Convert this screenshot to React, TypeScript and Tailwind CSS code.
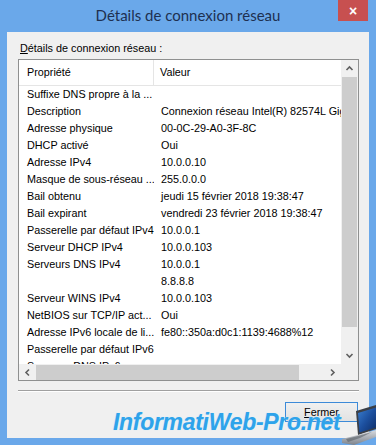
import React from "react";

const rows: [string, string][] = [
  ["Suffixe DNS propre à la ...", ""],
  ["Description", "Connexion réseau Intel(R) 82574L Gigabit Network Connection"],
  ["Adresse physique", "00-0C-29-A0-3F-8C"],
  ["DHCP activé", "Oui"],
  ["Adresse IPv4", "10.0.0.10"],
  ["Masque de sous-réseau ...", "255.0.0.0"],
  ["Bail obtenu", "jeudi 15 février 2018 19:38:47"],
  ["Bail expirant", "vendredi 23 février 2018 19:38:47"],
  ["Passerelle par défaut IPv4", "10.0.0.1"],
  ["Serveur DHCP IPv4", "10.0.0.103"],
  ["Serveurs DNS IPv4", "10.0.0.1"],
  ["", "8.8.8.8"],
  ["Serveur WINS IPv4", "10.0.0.103"],
  ["NetBIOS sur TCP/IP act...", "Oui"],
  ["Adresse IPv6 locale de li...", "fe80::350a:d0c1:1139:4688%12"],
  ["Passerelle par défaut IPv6", ""],
  ["Serveurs DNS IPv6", ""],
];

function Chevron({ dir }: { dir: "up" | "down" | "left" | "right" }) {
  const pts: Record<string, string> = {
    up: "1.5,6 4.5,3 7.5,6",
    down: "1.5,3 4.5,6 7.5,3",
    left: "6,1.5 3,4.5 6,7.5",
    right: "3,1.5 6,4.5 3,7.5",
  };
  return (
    <svg width="9" height="9" viewBox="0 0 9 9">
      <polyline points={pts[dir]} fill="none" stroke="#606060" strokeWidth="1.6" />
    </svg>
  );
}

function Laptop() {
  return (
    <svg width="34" height="42" viewBox="0 0 34 42">
      <defs>
        <linearGradient id="scr" x1="0" y1="0" x2="1" y2="1">
          <stop offset="0" stopColor="#3a7fd0" />
          <stop offset="0.5" stopColor="#1c4f9e" />
          <stop offset="1" stopColor="#0d2c66" />
        </linearGradient>
        <linearGradient id="base" x1="0" y1="0" x2="0" y2="1">
          <stop offset="0" stopColor="#d8dbe0" />
          <stop offset="1" stopColor="#7d838c" />
        </linearGradient>
      </defs>
      <polygon points="14,8 34,2 34,26 16,32" fill="#3b3f46" />
      <polygon points="16,10 34,4.5 34,24.5 17.5,29.5" fill="url(#scr)" />
      <polygon points="0,36 16,32 34,27 34,34 12,42 0,40" fill="url(#base)" />
      <polygon points="4,36 16,33 30,29 18,35 6,39" fill="#5a6068" opacity="0.6" />
    </svg>
  );
}

export default function App() {
  const font = { fontFamily: "'Liberation Sans', Arial, sans-serif" };
  return (
    <div
      className="w-[376px] h-[445px] bg-[#6aa8ea] flex flex-col relative overflow-hidden text-black"
      style={font}
    >
      {/* Title bar */}
      <div className="h-[32px] grid grid-cols-[1fr_auto_1fr]">
        <div />
        <div
          className="self-center text-[15px] text-[#1e3050] pb-[2px]"
          style={{ fontFamily: "Lato, 'Liberation Sans', Arial, sans-serif" }}
        >
          Détails de connexion réseau
        </div>
        <div className="flex justify-end items-start pr-[8px]">
          <div className="w-[30px] h-[21px] bg-[#c75050] flex items-center justify-center text-white text-[14px] font-bold leading-none">
            ×
          </div>
        </div>
      </div>

      {/* Client area */}
      <div className="mx-[7px] h-[406px] bg-[#f0f0f0] flex flex-col pl-[11px] pr-[10px] text-[10.8px]">
        <div className="pt-[9px] h-[27px] leading-[15px] pl-[2px]">
          <span className="underline">D</span>étails de connexion réseau :
        </div>

        {/* List view */}
        <div className="h-[322px] border border-[#8f9090] bg-white flex flex-col">
          <div className="flex flex-1 min-h-0">
            <div className="flex-1 min-w-0 overflow-hidden flex flex-col">
              <div className="h-[26px] shrink-0 flex items-center border-b border-[#e5e5e5]">
                <div className="w-[135px] h-full flex items-center pl-[8px] border-r border-[#e5e5e5]">
                  Propriété
                </div>
                <div className="pl-[6px]">Valeur</div>
              </div>
              {rows.map(([k, v], i) => (
                <div key={i} className="h-[17px] shrink-0 flex items-center leading-[17px] whitespace-nowrap">
                  <div className="w-[135px] shrink-0 pl-[8px] overflow-hidden">{k}</div>
                  <div className="pl-[7px]">{v}</div>
                </div>
              ))}
            </div>
            {/* vertical scrollbar */}
            <div className="w-[17px] bg-[#f0f0f0] flex flex-col items-center">
              <div className="h-[17px] flex items-center justify-center">
                <Chevron dir="up" />
              </div>
              <div className="w-[15px] h-[250px] bg-[#cdcdcd]" />
              <div className="flex-1" />
              <div className="h-[17px] flex items-center justify-center">
                <Chevron dir="down" />
              </div>
            </div>
          </div>
          {/* horizontal scrollbar */}
          <div className="h-[16px] flex bg-[#f0f0f0]">
            <div className="flex-1 flex items-center">
              <div className="w-[17px] flex items-center justify-center">
                <Chevron dir="left" />
              </div>
              <div className="w-[263px] h-[15px] bg-[#cdcdcd]" />
              <div className="flex-1" />
              <div className="w-[17px] flex items-center justify-center">
                <Chevron dir="right" />
              </div>
            </div>
            <div className="w-[17px] bg-[#f0f0f0]" />
          </div>
        </div>

        <div className="mt-[9px] border-t border-[#a0a0a0] border-b border-b-white" />

        <div className="mt-[10px] flex justify-end pr-[1px]">
          <div className="w-[73px] h-[20px] border border-[#3c8ad8] bg-gradient-to-b from-[#f0f0f0] to-[#e2e2e2] flex items-center justify-center leading-none">
            <span className="underline">F</span>ermer
          </div>
        </div>
      </div>

      {/* Watermark overlay */}
      <div
        className="absolute left-[113px] top-[411px] text-[23px] font-bold italic text-[#2ea3ea] leading-none tracking-[-0.3px]"
        style={{ fontFamily: "'Liberation Sans', Arial, sans-serif", textShadow: "0 0 1px #bfe3fb" }}
      >
        InformatiWeb-Pro.net
      </div>
      <div className="absolute left-[342px] top-[403px]">
        <Laptop />
      </div>
    </div>
  );
}
